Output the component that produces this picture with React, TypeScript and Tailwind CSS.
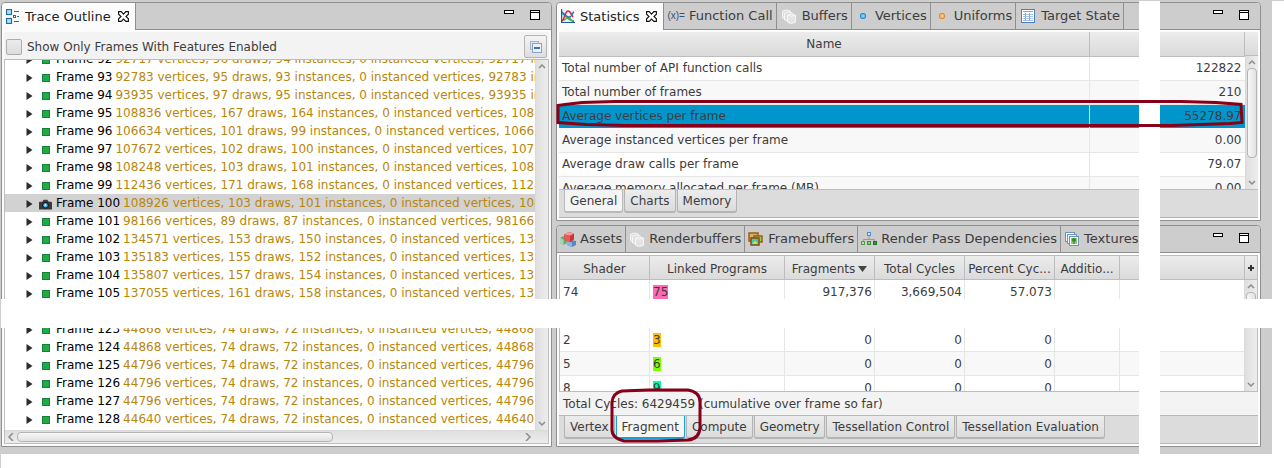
import type { ReactNode } from "react";

type Frame = { id: number; vertices: number; draws: number; instances: number };

const FRAMES: (Frame | null)[] = [
  { id: 92, vertices: 92717, draws: 96, instances: 94 },
  { id: 93, vertices: 92783, draws: 95, instances: 93 },
  { id: 94, vertices: 93935, draws: 97, instances: 95 },
  { id: 95, vertices: 108836, draws: 167, instances: 164 },
  { id: 96, vertices: 106634, draws: 101, instances: 99 },
  { id: 97, vertices: 107672, draws: 102, instances: 100 },
  { id: 98, vertices: 108248, draws: 103, instances: 101 },
  { id: 99, vertices: 112436, draws: 171, instances: 168 },
  { id: 100, vertices: 108926, draws: 103, instances: 101 },
  { id: 101, vertices: 98166, draws: 89, instances: 87 },
  { id: 102, vertices: 134571, draws: 153, instances: 150 },
  { id: 103, vertices: 135183, draws: 155, instances: 152 },
  { id: 104, vertices: 135807, draws: 157, instances: 154 },
  { id: 105, vertices: 137055, draws: 161, instances: 158 },
  null,
  { id: 123, vertices: 44868, draws: 74, instances: 72 },
  { id: 124, vertices: 44868, draws: 74, instances: 72 },
  { id: 125, vertices: 44796, draws: 74, instances: 72 },
  { id: 126, vertices: 44796, draws: 74, instances: 72 },
  { id: 127, vertices: 44796, draws: 74, instances: 72 },
  { id: 128, vertices: 44640, draws: 74, instances: 72 },
];

const STATS: [string, string][] = [
  ["Total number of API function calls", "122822"],
  ["Total number of frames", "210"],
  ["Average vertices per frame", "55278.97"],
  ["Average instanced vertices per frame", "0.00"],
  ["Average draw calls per frame", "79.07"],
  ["Average memory allocated per frame (MB)", "0.00"],
];

type Shader = { id: string; program: string; tint: string; fragments: string; cycles: string; percent: string };

const SHADERS: (Shader | null)[] = [
  { id: "74", program: "75", tint: "bg-[#ff69b4]", fragments: "917,376", cycles: "3,669,504", percent: "57.073" },
  null,
  { id: "2", program: "3", tint: "bg-[#ffc000]", fragments: "0", cycles: "0", percent: "0" },
  { id: "5", program: "6", tint: "bg-[#80ff00]", fragments: "0", cycles: "0", percent: "0" },
  { id: "8", program: "9", tint: "bg-[#00ffaa]", fragments: "0", cycles: "0", percent: "0" },
];

/* ---------- icons ---------- */

function OutlineIcon() {
  return (
    <svg width="14" height="15" viewBox="0 0 14 15" fill="none" className="shrink-0">
      <rect x="0.5" y="0.5" width="5" height="5" fill="#b9dcf2" stroke="#1c6ea4" strokeWidth="1.2" />
      <rect x="0.5" y="9.5" width="5" height="5" fill="#b9dcf2" stroke="#1c6ea4" strokeWidth="1.2" />
      <rect x="7.5" y="6.5" width="2" height="2" fill="#fff" stroke="#1c6ea4" />
      <path d="M8 2.5h5M8 12.5h5M11 7.5h2" stroke="#1c6ea4" strokeWidth="1.2" />
    </svg>
  );
}

function CloseIcon() {
  return (
    <svg width="11" height="11" viewBox="0 0 11 11" fill="#fff" stroke="#111" strokeWidth="1.1">
      <path d="M.6.6h2.6l2.3 2.5L7.8.6h2.6v2.6L8 5.5l2.4 2.3v2.6H7.8L5.5 8l-2.3 2.4H.6V7.8L3 5.5.6 3.2z" />
    </svg>
  );
}

function MinimizeIcon() {
  return (
    <svg width="10" height="4" viewBox="0 0 10 4">
      <rect x="0.5" y="0.5" width="9" height="3" fill="#fff" stroke="#000" />
    </svg>
  );
}

function MaximizeIcon() {
  return (
    <svg width="10" height="10" viewBox="0 0 10 10">
      <rect x="0.5" y="0.5" width="9" height="9" fill="#fff" stroke="#000" />
      <path d="M0 2.5h10" stroke="#000" />
    </svg>
  );
}

function CollapseIcon() {
  return (
    <svg width="12" height="12" viewBox="0 0 12 12" fill="none">
      <rect x="0.5" y="0.5" width="8" height="8" fill="#dbe6f3" stroke="#9fb3cf" />
      <rect x="2.5" y="2.5" width="9" height="9" fill="#e8f1fb" stroke="#8ba3c7" />
      <path d="M4 7h6" stroke="#1f4e8c" strokeWidth="1.6" />
    </svg>
  );
}

function StatisticsIcon() {
  return (
    <svg width="14" height="15" viewBox="0 0 14 15" fill="none">
      <rect x="1" y="1" width="12" height="12" fill="#e9f2fb" />
      <path d="M1 5c3-1 4 6 12 7" stroke="#3aa655" strokeWidth="1.4" />
      <path d="M2 10c2 3 3-2 5-2s3 5 6 5" stroke="#4fae3b" strokeWidth="1.4" />
      <path d="M1 12C4 10 4 2 7 2s3 4 5 6" stroke="#e02b2b" strokeWidth="1.6" />
      <path d="M1 3c3 3 6 6 8 5s2-4 4-5" stroke="#2f6fc0" strokeWidth="1.4" />
      <path d="M.6 0v13.5H14" stroke="#1c5a9c" strokeWidth="1.2" />
    </svg>
  );
}

function BuffersIcon() {
  return (
    <svg width="14" height="15" viewBox="0 0 14 15" fill="#dedede" stroke="#f6f6f6">
      <path d="M.5 2.2Q4.500-.4 8.500 2.200v6.600Q4.500 11.400.5 8.800z" />
      <path d="M2.500 4.200q4-2.600 8 0v6.600q-4 2.600-8 0z" />
      <path d="M5.500 6.200q4-2.600 8 0v7q-4 2.600-8 0z" fill="#e4e4e4" />
      <path d="M5.500 6.200q4 2.200 8 0" fill="none" />
    </svg>
  );
}

function DotIcon({ fill, stroke }: { fill: string; stroke: string }) {
  return (
    <svg width="6" height="6" viewBox="0 0 6 6">
      <rect x="0.5" y="0.5" width="5" height="5" rx="1.5" fill={fill} stroke={stroke} />
      <rect x="2" y="2" width="2" height="2" fill="#fff" fillOpacity=".3" />
    </svg>
  );
}

function TableIcon() {
  return (
    <svg width="14" height="14" viewBox="0 0 14 14" fill="none">
      <rect x="0.5" y="0.5" width="13" height="13" fill="#fff" stroke="#4f7fc0" />
      <path d="M2 2.5h10" stroke="#7cc36a" />
      <path d="M2 5.5h10M2 7.5h10M2 9.5h10M2 11.5h10" stroke="#a9c4e6" />
      <path d="M4.5 4v8M8.5 4v8" stroke="#8fb0da" />
    </svg>
  );
}

function AssetsIcon() {
  return (
    <svg width="16" height="15" viewBox="0 0 16 15">
      <path d="M0 6l3.500-2L7 6v5l-3.500 2L0 11z" fill="#5fae7a" />
      <path d="M0 6l3.500 1.600v5.400L0 11z" fill="#a5d6b4" />
      <path d="M7 9l4-1 5 1v4l-4 2-5-2z" fill="#5d86bd" />
      <path d="M7 9l5 1.500V15l-5-2z" fill="#8db2dd" />
      <path d="M4 2.500L9 0l5 1.500v6L10 10 4.500 8z" fill="#cf3232" />
      <path d="M4 2.500L9 0l5 1.500-4 2.300z" fill="#f59a9a" />
      <path d="M4 2.500l6 1.300V10L4.500 8z" fill="#e85a5a" />
    </svg>
  );
}

function FramebuffersIcon() {
  return (
    <svg width="15" height="14" viewBox="0 0 15 14" fill="none">
      <rect x="1" y="1" width="9" height="8" fill="#d7b25a" stroke="#a2591b" strokeWidth="1.5" />
      <rect x="6" y="4" width="8" height="6" fill="#8ed84a" stroke="#a2591b" strokeWidth="1.5" />
      <rect x="3" y="6" width="8" height="7" fill="#36c9d9" stroke="#8a4a14" strokeWidth="1.5" />
      <path d="M4 12l3-3 3 2.5z" fill="#f5e13a" />
      <path d="M4 8h3" stroke="#5fdc3c" />
    </svg>
  );
}

function DependenciesIcon() {
  return (
    <svg width="16" height="14" viewBox="0 0 16 14" fill="none">
      <path d="M8 4v4M2.500 9V7.500h11V9" stroke="#9a9a9a" />
      <rect x="6.5" y="0.5" width="3" height="3" fill="#cfe2fa" stroke="#4f8ad8" />
      <rect x="0.5" y="9.5" width="3" height="3" fill="#b4e0a0" stroke="#4f9e45" />
      <rect x="6.5" y="9.5" width="3" height="3" fill="#8ccd78" stroke="#3f8f38" />
      <rect x="12.5" y="9.5" width="3" height="3" fill="#3a9a3a" stroke="#1f6f24" />
    </svg>
  );
}

function TexturesIcon() {
  return (
    <svg width="14" height="14" viewBox="0 0 14 14" fill="#f4f8fd" stroke="#6f93bf">
      <rect x="0.5" y="0.5" width="9" height="9" />
      <rect x="2.5" y="2.5" width="9" height="9" />
      <rect x="4.5" y="4.5" width="9" height="9" />
      <path d="M6 6h6v6H6z" fill="#8fcf6b" stroke="none" />
      <circle cx="9" cy="8" r="2" fill="#2f8a2f" stroke="none" />
      <path d="M8.500 10h1v2h-1z" fill="#7a4a1c" stroke="none" />
    </svg>
  );
}

function CameraIcon() {
  return (
    <svg width="13" height="11" viewBox="0 0 14 11">
      <path d="M0 3.500Q0 2.500 1 2.500h2.500L5 .5h4l1.500 2H13q1 0 1 1V11H0z" fill="#3a3a3a" />
      <circle cx="7" cy="6.300" r="3.400" fill="#14181c" />
      <circle cx="7" cy="6.300" r="2.400" fill="#45b4e6" />
      <circle cx="6.800" cy="6" r="1" fill="#d6f1fc" />
    </svg>
  );
}

function Chevron({ d }: { d: string }) {
  return (
    <svg width="8" height="8" viewBox="0 0 8 8" fill="none" stroke="#8c8c8c" strokeWidth="1.5">
      <path d={d} />
    </svg>
  );
}

const UP = "M1 6l3-3 3 3";
const DOWN = "M1 2l3 3 3-3";
const LEFT = "M6 0L2 4l4 4";
const RIGHT = "M2 0l4 4-4 4";

/* ---------- shared parts ---------- */

function ViewTab({ icon, label, active, closable }: { icon: ReactNode; label: string; active?: boolean; closable?: boolean }) {
  return (
    <button
      type="button"
      className={
        active
          ? "-mb-px flex shrink-0 items-center gap-[5px] rounded-tl border-r border-[#8f8f8f] bg-[#fcfcfc] px-1 text-[13px] text-[#222]"
          : "flex shrink-0 items-center gap-1 border-r border-[#8f8f8f] px-[3px] text-[13px] text-[#3c3c3c]"
      }
    >
      {icon}
      <span className="whitespace-nowrap">{label}</span>
      {closable && (
        <span className="px-0.5">
          <CloseIcon />
        </span>
      )}
    </button>
  );
}

function View({ tabs, children, className }: { tabs: ReactNode; children: ReactNode; className: string }) {
  return (
    <section className={`relative flex min-w-0 flex-col rounded-t border border-[#8f8f8f] bg-[#fcfcfc] ${className}`}>
      <header className="flex h-[27px] shrink-0 rounded-t border-b border-[#8f8f8f] bg-[#cdcdcd]">
        {tabs}
        <div className="ml-auto flex items-start gap-4 pr-[11px] pt-[7px]">
          <button type="button" aria-label="Minimize" className="flex"><MinimizeIcon /></button>
          <button type="button" aria-label="Maximize" className="flex"><MaximizeIcon /></button>
        </div>
      </header>
      <div className="flex min-h-0 flex-1 flex-col px-0.5 py-0.5">{children}</div>
    </section>
  );
}

function PageTab({ label, state }: { label: string; state?: "active" | "focused" }) {
  const look =
    state === "focused"
      ? "border-[#1f9fd0] bg-[#f6f6f6]"
      : state === "active"
        ? "border-[#bababa] bg-[#f4f4f4]"
        : "border-[#b4b4b4] bg-gradient-to-b from-[#ececec] to-[#dcdcdc]";
  return (
    <button type="button" className={`h-[23px] rounded-b-[3px] border-x border-b-2 px-[5px] pt-px whitespace-nowrap ${look}`}>
      {label}
    </button>
  );
}

function VerticalScroll({ thumb }: { thumb?: string }) {
  return (
    <div className="flex w-[13px] shrink-0 flex-col items-center justify-between border-l border-[#dadada] bg-gradient-to-r from-[#dfdfdf] to-[#ededed]">
      <span className="flex h-3 items-center"><Chevron d={UP} /></span>
      {thumb && <span className={`mb-auto w-2.5 shrink-0 rounded-sm border border-[#b4b4b4] bg-gradient-to-r from-[#f7f7f7] to-[#e2e2e2] ${thumb}`} />}
      <span className="flex h-3 items-center"><Chevron d={DOWN} /></span>
    </div>
  );
}

const HEAD = "bg-gradient-to-b from-[#ececec] to-[#dadada]";

/* ---------- views ---------- */

function TraceOutline() {
  return (
    <View className="min-h-0" tabs={<ViewTab active closable icon={<OutlineIcon />} label="Trace Outline" />}>
      <div className="flex h-[27px] shrink-0 items-center justify-between bg-[#f3f3f3] px-0.5 pt-0.5">
        <label className="flex items-center gap-[5px]">
          <input
            type="checkbox"
            className="size-4 appearance-none rounded-[2px] border border-[#adadad] bg-gradient-to-b from-[#ececec] to-[#dcdcdc]"
          />
          Show Only Frames With Features Enabled
        </label>
        <button
          type="button"
          aria-label="Collapse All"
          className="flex size-[23px] items-center justify-center rounded-[2px] border border-[#b4b4b4] bg-gradient-to-b from-[#f4f4f4] to-[#dedede]"
        >
          <CollapseIcon />
        </button>
      </div>
      <div className="flex min-h-0 flex-1 flex-col border border-[#bdbdbd] bg-white">
        <div className="flex min-h-0 flex-1">
          <ul className="flex min-w-0 flex-1 flex-col justify-end overflow-hidden pb-0.5">
            {FRAMES.map((f, i) =>
              f ? (
                <li key={f.id} className={`flex h-[18px] shrink-0 items-center pl-[21px] whitespace-nowrap ${f.id === 100 ? "bg-[#d2d2d2]" : ""}`}>
                  <svg width="7" height="8" viewBox="0 0 7 8" className="mt-0.5 shrink-0"><path d="M.5 0L6.500 4 .5 8z" fill="#2c2c2c" /></svg>
                  <span className="mt-0.5 flex w-[21px] shrink-0 justify-center pl-1">
                    {f.id === 100 ? <CameraIcon /> : <span className="size-2 border border-[#14803a] bg-[#22aa48]" />}
                  </span>
                  <span className="pl-0.5 text-black">Frame {f.id}</span>
                  <span className="pl-[3px] text-[#b8860b]">
                    {f.vertices} vertices, {f.draws} draws, {f.instances} instances, 0 instanced vertices, {f.vertices} indices
                  </span>
                </li>
              ) : (
                <li key={`gap-${i}`} aria-hidden className="h-[18px] shrink-0" />
              ),
            )}
          </ul>
          <VerticalScroll />
        </div>
        <div className="flex h-[13px] shrink-0 items-center border-t border-[#dadada] bg-gradient-to-b from-[#dfdfdf] to-[#ededed] pr-4">
          <span className="flex w-3 justify-center"><Chevron d={LEFT} /></span>
          <span className="h-2.5 w-[60%] rounded-sm border border-[#b4b4b4] bg-gradient-to-b from-[#f7f7f7] to-[#e2e2e2]" />
          <span className="ml-auto"><Chevron d={RIGHT} /></span>
        </div>
      </div>
    </View>
  );
}

function Statistics() {
  return (
    <View
      className="shrink-0"
      tabs={
        <>
          <ViewTab active closable icon={<StatisticsIcon />} label="Statistics" />
          <ViewTab
            icon={<span className="font-['Liberation_Sans',sans-serif] text-[10px] text-[#33507f]">(x)=</span>}
            label="Function Call"
          />
          <ViewTab icon={<span className="px-0.5"><BuffersIcon /></span>} label="Buffers" />
          <ViewTab icon={<span className="px-[5px]"><DotIcon fill="#5bb8ea" stroke="#2f8fca" /></span>} label="Vertices" />
          <ViewTab icon={<span className="px-[5px]"><DotIcon fill="#f9b266" stroke="#e08a35" /></span>} label="Uniforms" />
          <ViewTab icon={<span className="px-0.5"><TableIcon /></span>} label="Target State" />
        </>
      }
    >
      <div className="flex h-[158px] flex-col border-b border-[#bdbdbd]">
        <div className="flex min-h-0 flex-1 overflow-hidden bg-white">
          <table className="w-full table-fixed border-collapse self-start">
            <colgroup>
              <col />
              <col className="w-[155px]" />
            </colgroup>
            <thead>
              <tr className={`h-6 ${HEAD}`}>
                <th className="border-r border-b border-[#bdbdbd] p-0 font-normal">Name</th>
                <th aria-label="Value" className="border-r border-b border-[#bdbdbd] p-0" />
              </tr>
            </thead>
            <tbody>
              {STATS.map(([name, value], i) => (
                <tr key={name} className={`h-6 ${i === 2 ? "bg-[#0096cc]" : i % 2 ? "bg-[#f8f8f8]" : "bg-white"}`}>
                  <td className={`border-r border-[#e6e6e6] p-0 pl-[3px] ${i === 2 ? "" : "border-b"}`}>{name}</td>
                  <td className={`border-[#e6e6e6] p-0 pr-[3px] text-right ${i === 2 ? "" : "border-b"}`}>{value}</td>
                </tr>
              ))}
            </tbody>
          </table>
          <div className="flex shrink-0 flex-col">
            <div className={`h-6 shrink-0 border-b border-[#bdbdbd] ${HEAD}`} />
            <div className="flex min-h-0 flex-1"><VerticalScroll thumb="h-[90px]" /></div>
          </div>
        </div>
      </div>
      <nav className="flex h-7 items-start gap-px border-b border-[#b0b0b0] bg-[#dcdcdc] pl-[5px]">
        <PageTab label="General" state="active" />
        <PageTab label="Charts" />
        <PageTab label="Memory" />
      </nav>
      <svg
        viewBox="0 0 690 32"
        preserveAspectRatio="none"
        fill="none"
        className="pointer-events-none absolute top-[94px] left-[-2px] z-20 h-8 w-[calc(100%-13px)]"
      >
        <path
          d="M3 8.500L10 7.500 27 5.500 60 4.500H626L661 5.500 686 7.500 687 25.500 675 26.500 617 28.500H70L31 27.500 3 25.500z"
          stroke="#850018"
          strokeWidth="3"
          vectorEffect="non-scaling-stroke"
        />
      </svg>
    </View>
  );
}

function Assets() {
  const line = "border-r border-[#e6e6e6] p-0";
  const head = "border-r border-b border-[#bdbdbd] p-0 pt-0.5 font-normal";
  return (
    <View
      className="min-h-0 flex-1"
      tabs={
        <>
          <ViewTab icon={<AssetsIcon />} label="Assets" />
          <ViewTab icon={<span className="px-px"><BuffersIcon /></span>} label="Renderbuffers" />
          <ViewTab icon={<span className="pr-px"><FramebuffersIcon /></span>} label="Framebuffers" />
          <ViewTab icon={<DependenciesIcon />} label="Render Pass Dependencies" />
          <ViewTab icon={<span className="px-px"><TexturesIcon /></span>} label="Textures" />
        </>
      }
    >
      <div className="flex min-h-0 flex-1 overflow-hidden border border-[#bdbdbd] bg-white">
        <table className="w-full table-fixed border-separate border-spacing-0 self-start">
          <colgroup>
            <col className="w-[90px]" />
            <col className="w-[135px]" />
            <col className="w-[90px]" />
            <col className="w-[90px]" />
            <col className="w-[90px]" />
            <col className="w-[65px]" />
            <col />
          </colgroup>
          <thead>
            <tr className={`h-6 ${HEAD}`}>
              <th className={head}>Shader</th>
              <th className={head}>Linked Programs</th>
              <th className={head}>
                <span className="inline-flex items-center gap-[3px]">
                  Fragments
                  <svg width="9" height="6" viewBox="0 0 9 6"><path d="M0 0h9L4.500 6z" fill="#444" /></svg>
                </span>
              </th>
              <th className={head}>Total Cycles</th>
              <th className={head}>Percent Cyc...</th>
              <th className={head}>Additio...</th>
              <th aria-label="More" className="border-b border-[#bdbdbd] p-0" />
            </tr>
          </thead>
          <tbody>
            {SHADERS.map((s, i) => (
              <tr key={i} className={`h-6 ${i % 2 ? "bg-[#f8f8f8]" : "bg-white"}`}>
                <td className={`${line} border-b pl-[3px]`}>{s?.id}</td>
                <td className={`${line} border-b pl-[3px]`}>{s && <span className={s.tint}>{s.program}</span>}</td>
                <td className={`${line} border-b pr-0.5 text-right`}>{s?.fragments}</td>
                <td className={`${line} border-b pr-0.5 text-right`}>{s?.cycles}</td>
                <td className={`${line} border-b pr-0.5 text-right`}>{s?.percent}</td>
                <td className={`${line} border-b`} />
                <td className="border-b border-[#e6e6e6] p-0" />
              </tr>
            ))}
          </tbody>
        </table>
        <div className="flex shrink-0 flex-col">
          <button type="button" aria-label="Choose columns" className={`flex h-6 shrink-0 items-center justify-center border-b border-l border-[#bdbdbd] ${HEAD}`}>
            <svg width="6" height="6" viewBox="0 0 6 6"><path d="M3 0v6M0 3h6" stroke="#333" strokeWidth="2" /></svg>
          </button>
          <div className="flex min-h-0 flex-1"><VerticalScroll thumb="h-6" /></div>
        </div>
      </div>
      <p className="flex h-[23px] shrink-0 items-center bg-[#f3f3f3] pl-1">
        Total Cycles: 6429459 (cumulative over frame so far)
      </p>
      <nav className="flex h-[29px] shrink-0 items-start gap-px border-t border-b border-[#b8b8b8] bg-[#dcdcdc] pl-[5px]">
        <PageTab label="Vertex" />
        <PageTab label="Fragment" state="focused" />
        <PageTab label="Compute" />
        <PageTab label="Geometry" />
        <PageTab label="Tessellation Control" />
        <PageTab label="Tessellation Evaluation" />
      </nav>
      <svg width="92" height="56" viewBox="0 0 92 56" fill="none" className="pointer-events-none absolute bottom-0.5 left-[53px] z-20">
        <path d="M12 3L38 2H78Q90 4 90 14V40Q89 51 78 52L48 53H14Q2 50 2 42V14Q3 5 12 3z" stroke="#850018" strokeWidth="3" />
      </svg>
    </View>
  );
}

export default function App() {
  return (
    <main className="relative flex h-screen min-h-[400px] overflow-hidden border-t border-l border-[#cdcdcd] bg-white pr-3 pb-3.5 font-['DejaVu_Sans',sans-serif] text-[12px] leading-4 text-[#3c3c3c]">
      <div className="grid min-h-0 min-w-0 flex-1 grid-cols-[551fr_705fr] grid-rows-[minmax(0,1fr)] gap-1 bg-[#cdcdcd] pt-px pr-[11px] pb-[7px]">
        <TraceOutline />
        <div className="flex min-h-0 min-w-0 flex-col gap-1">
          <Statistics />
          <Assets />
        </div>
      </div>
      <div className="absolute inset-x-0 bottom-[140px] z-10 h-[29px] bg-white" />
      <div className="absolute inset-y-0 right-[124px] z-10 w-[21px] bg-white" />
    </main>
  );
}
